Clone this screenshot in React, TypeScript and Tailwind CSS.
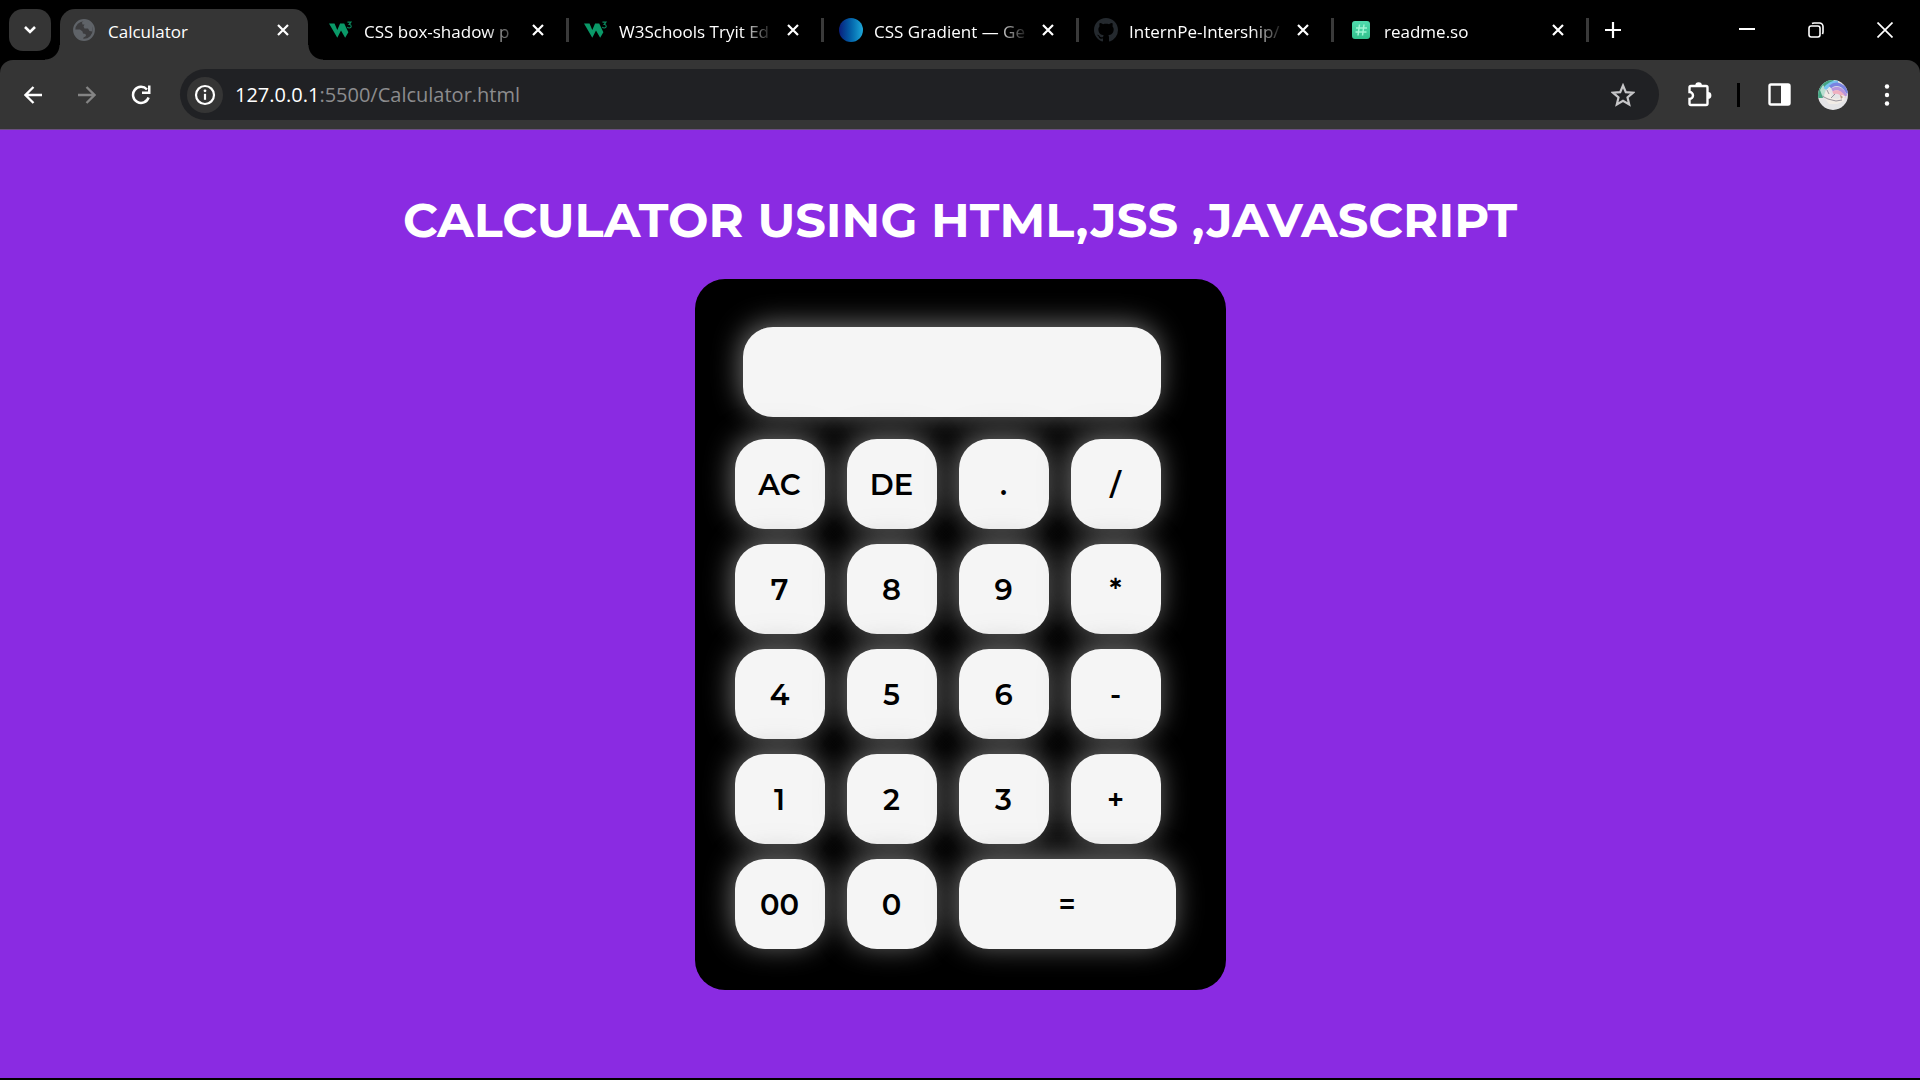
import React from "react";

const fade = "[mask-image:linear-gradient(to_right,black_76%,transparent_97%)]";

function W3Icon() {
  return (
    <svg width="26" height="24" viewBox="0 0 26 24" aria-hidden="true">
      <path d="M0 5h6l3 7 3-7h4.500l4.500 9.500-3.500 6L13 12.500 9 20.500z" fill="#0a9968" />
      <path d="M20 3.500h3.800l-2 2.600c3 0 3 3.700.2 3.700-1 0-1.800-.4-2.200-1" fill="none" stroke="#0a8a5e" strokeWidth="1.200" />
    </svg>
  );
}

function GlobeIcon() {
  return (
    <svg width="22" height="22" viewBox="0 0 22 22" aria-hidden="true">
      <circle cx="11" cy="11" r="9.800" fill="#3c3c3e" stroke="#5f6368" strokeWidth="2.200" />
      <path d="M11 1.500c3 0 6.800 2 8.500 5.500v5.500l-3-.5-1.500-2.500h-3.500l-1-2 1-2H9.500l-.5-2z" fill="#5f6368" />
      <path d="M1.500 10.500l5.500 0 2.500 2 .5 2 2.500.5.5 2-2.500 1.500-.5 2C5 20 1.500 16 1.500 10.500z" fill="#5f6368" />
    </svg>
  );
}

function GradientIcon() {
  return <span className="block size-6 rounded-full bg-linear-to-r from-[#0b1c7c] to-[#1fa8d8]" />;
}

function GithubIcon() {
  return (
    <svg width="24" height="24" viewBox="0 0 16 16" fill="#24292e" aria-hidden="true">
      <path d="M8 0C3.580 0 0 3.580 0 8c0 3.540 2.290 6.530 5.470 7.590.4.070.55-.17.55-.38 0-.19-.01-.82-.01-1.490-2.010.37-2.530-.49-2.690-.94-.09-.23-.48-.94-.82-1.130-.28-.15-.68-.52-.01-.53.63-.01 1.080.58 1.230.82.72 1.210 1.870.87 2.330.66.070-.52.28-.87.51-1.070-1.780-.2-3.640-.89-3.640-3.950 0-.87.31-1.590.82-2.150-.08-.2-.36-1.020.08-2.120 0 0 .67-.21 2.200.82.64-.18 1.320-.27 2-.27s1.360.09 2 .27c1.530-1.040 2.200-.82 2.200-.82.44 1.100.16 1.920.08 2.120.51.56.82 1.270.82 2.150 0 3.070-1.870 3.750-3.650 3.950.29.25.54.73.54 1.480 0 1.070-.01 1.930-.01 2.200 0 .21.15.46.55.38A8 8 0 0 0 16 8c0-4.420-3.580-8-8-8z" />
    </svg>
  );
}

function ReadmeIcon() {
  return (
    <svg width="24" height="24" viewBox="0 0 24 24" aria-hidden="true">
      <defs>
        <linearGradient id="readme-bg" x1="0" y1="0" x2="0" y2="1">
          <stop offset="0" stopColor="#50dcae" />
          <stop offset="1" stopColor="#32c08c" />
        </linearGradient>
      </defs>
      <rect x="3" y="3" width="18" height="18" rx="3" fill="url(#readme-bg)" />
      <path d="M10.500 6.500l-1.500 11M15 6.500l-1.500 11M7 10h11M6.500 14h11" stroke="#9df5d3" strokeWidth="1.500" />
    </svg>
  );
}

function Cross() {
  return (
    <svg width="12" height="12" viewBox="0 0 12 12" aria-hidden="true">
      <path d="M1 1l10 10M11 1L1 11" stroke="#fff" strokeWidth="2.200" />
    </svg>
  );
}

function Tab({ title, icon }: { title: string; icon: React.ReactNode }) {
  return (
    <div className="flex h-6 min-w-0 basis-[255px] items-center border-r-[3px] border-[#3a3a3a] pl-[15px] pr-[22px]">
      <span className="flex w-6 shrink-0 justify-center">{icon}</span>
      <span className={"ml-[11px] mt-[3px] min-w-0 flex-1 whitespace-nowrap text-[17px] leading-6 text-white " + fade}>{title}</span>
      <button aria-label={"Close " + title} className="ml-2 shrink-0">
        <Cross />
      </button>
    </div>
  );
}

function TabStrip() {
  return (
    <div className="flex h-[60px] items-start bg-black pt-[9px]">
      <button aria-label="Search tabs" className="ml-[9px] flex size-[42px] shrink-0 items-center justify-center rounded-[14px] bg-[#353535]">
        <svg width="14" height="10" viewBox="0 0 14 10" aria-hidden="true">
          <path d="M2 2l5 5 5-5" fill="none" stroke="#fff" strokeWidth="2.600" />
        </svg>
      </button>
      <div className="relative ml-[9px] flex h-[51px] min-w-0 basis-[248px] items-center rounded-t-[15px] bg-[#353535] pb-[9px] pl-[13px] pr-[19px]">
        <span className="absolute -left-[15px] bottom-0 size-[15px] bg-[radial-gradient(circle_at_0_0,transparent_14px,#353535_15px)]" />
        <span className="absolute -right-[15px] bottom-0 size-[15px] bg-[radial-gradient(circle_at_100%_0,transparent_14px,#353535_15px)]" />
        <GlobeIcon />
        <span className="ml-[13px] mt-[3px] flex-1 text-[17px] leading-6 text-white">Calculator</span>
        <button aria-label="Close Calculator">
          <Cross />
        </button>
      </div>
      <div className="flex min-w-0 flex-1 items-center pt-[9px]">
        <div className="flex min-w-0 basis-[261px] pl-[6px]">
          <Tab title="CSS box-shadow p" icon={<W3Icon />} />
        </div>
        <Tab title="W3Schools Tryit Ed" icon={<W3Icon />} />
        <Tab title="CSS Gradient — Ge" icon={<GradientIcon />} />
        <Tab title="InternPe-Intership/" icon={<GithubIcon />} />
        <Tab title="readme.so" icon={<ReadmeIcon />} />
        <button aria-label="New tab" className="ml-4 shrink-0">
          <svg width="16" height="16" viewBox="0 0 16 16" aria-hidden="true">
            <path d="M8 0v16M0 8h16" stroke="#fff" strokeWidth="2.200" />
          </svg>
        </button>
      </div>
      <div className="flex shrink-0 items-center gap-[53px] pr-[27px] pt-[13px] text-white">
        <button aria-label="Minimize">
          <svg width="16" height="16" viewBox="0 0 16 16" aria-hidden="true">
            <path d="M0 7h16" stroke="currentColor" strokeWidth="2" />
          </svg>
        </button>
        <button aria-label="Restore">
          <svg width="16" height="16" viewBox="0 0 16 16" fill="none" stroke="currentColor" strokeWidth="1.600" aria-hidden="true">
            <rect x="1" y="4" width="11" height="11" rx="2.200" />
            <path d="M4 1.500Q5 1 6 1h5.500A3.500 3.500 0 0 1 15 4.500V10q0 1-.6 2" />
          </svg>
        </button>
        <button aria-label="Close window">
          <svg width="16" height="16" viewBox="0 0 16 16" aria-hidden="true">
            <path d="M.5.5l15 15M15.500.5l-15 15" stroke="currentColor" strokeWidth="1.700" />
          </svg>
        </button>
      </div>
    </div>
  );
}

function Toolbar() {
  return (
    <div className="bg-black">
      <div className="flex h-[70px] items-center rounded-t-[13px] border-b border-[#6a5080] bg-[#353535]">
        <button aria-label="Back" className="ml-6">
          <svg width="18" height="18" viewBox="0 0 18 18" fill="none" stroke="#fff" strokeWidth="2.300" aria-hidden="true">
            <path d="M18 9H2M9.500 1L1.500 9l8 8" />
          </svg>
        </button>
        <button aria-label="Forward" className="ml-9">
          <svg width="18" height="18" viewBox="0 0 18 18" fill="none" stroke="#848484" strokeWidth="2.300" aria-hidden="true">
            <path d="M0 9h16M8.500 1l8 8-8 8" />
          </svg>
        </button>
        <button aria-label="Reload" className="ml-[35px]">
          <svg width="20" height="20" viewBox="0 0 20 20" aria-hidden="true">
            <path d="M17.600 12.500A8 8 0 1 1 16 4.500" fill="none" stroke="#fff" strokeWidth="2.500" />
            <path d="M19.500.5v8.500H11V6.500h6V.5z" fill="#fff" />
          </svg>
        </button>
        <div className="ml-[29px] flex h-[51px] min-w-0 flex-1 items-center rounded-full bg-[#202124] pl-[7px] pr-6">
          <button aria-label="Site information" className="flex size-9 shrink-0 items-center justify-center rounded-full bg-[#353535]">
            <svg width="22" height="22" viewBox="0 0 22 22" aria-hidden="true">
              <circle cx="11" cy="11" r="9" fill="none" stroke="#fff" strokeWidth="2.200" />
              <path d="M11 9.800v6" stroke="#fff" strokeWidth="2.200" />
              <circle cx="11" cy="6.800" r="1.400" fill="#fff" />
            </svg>
          </button>
          <span className="ml-3 flex-1 text-[20px] leading-7 text-[#8c8c8e]">
            <span className="text-white">127.0.0.1</span>:5500/Calculator.html
          </span>
          <button aria-label="Bookmark this tab">
            <svg width="24" height="24" viewBox="0 0 24 24" aria-hidden="true">
              <path d="M12 2.500l2.800 6.600 7.200.6-5.500 4.700 1.700 7L12 17.700l-6.200 3.700 1.700-7L2 9.700l7.200-.6z" fill="none" stroke="#c6c6c8" strokeWidth="2.200" />
            </svg>
          </button>
        </div>
        <button aria-label="Extensions" className="ml-7">
          <svg width="26" height="26" viewBox="0 0 26 26" aria-hidden="true">
            <path d="M4 4h15q1.500 0 1.500 1.500v16q0 1.500-1.500 1.500H4q-1.500 0-1.500-1.500V17a3.500 3.500 0 0 0 0-7V5.500Q2.500 4 4 4z" fill="none" stroke="#fff" strokeWidth="2.400" />
            <path d="M8.300 3.500a3.300 3.300 0 0 1 6.600 0zM21 10a3.400 3.400 0 0 1 0 6.800z" fill="#fff" />
          </svg>
        </button>
        <span className="ml-6 h-6 w-[3px] bg-black" />
        <button aria-label="Side panel" className="ml-7">
          <svg width="23" height="23" viewBox="0 0 23 23" aria-hidden="true">
            <rect x="1.500" y="1.500" width="20" height="20" rx="1.500" fill="none" stroke="#fff" strokeWidth="2.400" />
            <path d="M13 1h8.500v21H13z" fill="#fff" />
          </svg>
        </button>
        <button aria-label="Profile" className="ml-[27px]">
          <svg width="30" height="30" viewBox="0 0 30 30" aria-hidden="true">
            <defs>
              <clipPath id="avatar-clip">
                <circle cx="15" cy="15" r="15" />
              </clipPath>
            </defs>
            <g clipPath="url(#avatar-clip)">
              <rect width="30" height="30" fill="#e4e4e6" />
              <path d="M0 0h16l-4 6-6 4-1 8H0z" fill="#45a583" />
              <path d="M2 10l3-5 3 4-3 9z" fill="#b9e0d0" />
              <g fill="none" strokeWidth="3.500">
                <path d="M7 9Q12 2 20 2" stroke="#78c3f0" />
                <path d="M12 7q5-4 10-2 5 2 8 8" stroke="#7a83e0" />
                <path d="M14 10q5-3 9 0 3 2 5 6" stroke="#b795dd" />
                <path d="M15 13q4-2 7 0 3 2 4 5" stroke="#efb0c0" />
              </g>
              <path d="M6 17l3-8 4 4 1 5 6 1 4-4 3 1-1 5-7 3H11z" fill="#f1ece6" />
              <path d="M4 16l6 3 8 2 6-1M9 10l2 4M13 18l4-4" fill="none" stroke="#8d8a94" strokeWidth=".9" />
              <path d="M22 15l3 2-2 2z" fill="#b99a80" />
            </g>
          </svg>
        </button>
        <button aria-label="Menu" className="ml-9 mr-[30px]">
          <svg width="6" height="24" viewBox="0 0 6 24" fill="#fff" aria-hidden="true">
            <circle cx="3" cy="3.500" r="2.200" />
            <circle cx="3" cy="12" r="2.200" />
            <circle cx="3" cy="20.500" r="2.200" />
          </svg>
        </button>
      </div>
    </div>
  );
}

const glow = "bg-[#f5f5f5] shadow-[-2px_-3px_28px_rgba(165,165,165,0.7)]";

const rows = [
  ["AC", "DE", ".", "/"],
  ["7", "8", "9", "*"],
  ["4", "5", "6", "-"],
  ["1", "2", "3", "+"],
  ["00", "0", "="],
];

function Calculator() {
  return (
    <main className="flex flex-1 flex-col items-center bg-[#8a2be2] font-[Montserrat,Inter,sans-serif]">
      <h1 className="mt-[61px] text-[48px] font-bold leading-[58px] text-white">CALCULATOR USING HTML,JSS ,JAVASCRIPT</h1>
      <form className="mt-[30px] w-[531px] rounded-[30px] bg-black pb-[41px] pl-10 pt-12" onSubmit={(e) => e.preventDefault()}>
        <input aria-label="Result" readOnly className={"ml-2 block h-[90px] w-[418px] rounded-[30px] px-6 text-right text-3xl outline-none " + glow} />
        <div className="mt-[22px] flex flex-col gap-[15px]">
          {rows.map((row) => (
            <div key={row[0]} className="flex gap-[22px]">
              {row.map((key) => (
                <button
                  key={key}
                  type="button"
                  className={"h-[90px] rounded-[30px] pt-px text-[29px] font-semibold text-black " + (key === "=" ? "w-[217px] " : "w-[90px] ") + glow}
                >
                  {key}
                </button>
              ))}
            </div>
          ))}
        </div>
      </form>
    </main>
  );
}

export default function App() {
  return (
    <div className="flex min-h-screen flex-col border-b-2 border-black font-['Open_Sans','Noto_Sans',sans-serif]">
      <TabStrip />
      <Toolbar />
      <Calculator />
    </div>
  );
}
